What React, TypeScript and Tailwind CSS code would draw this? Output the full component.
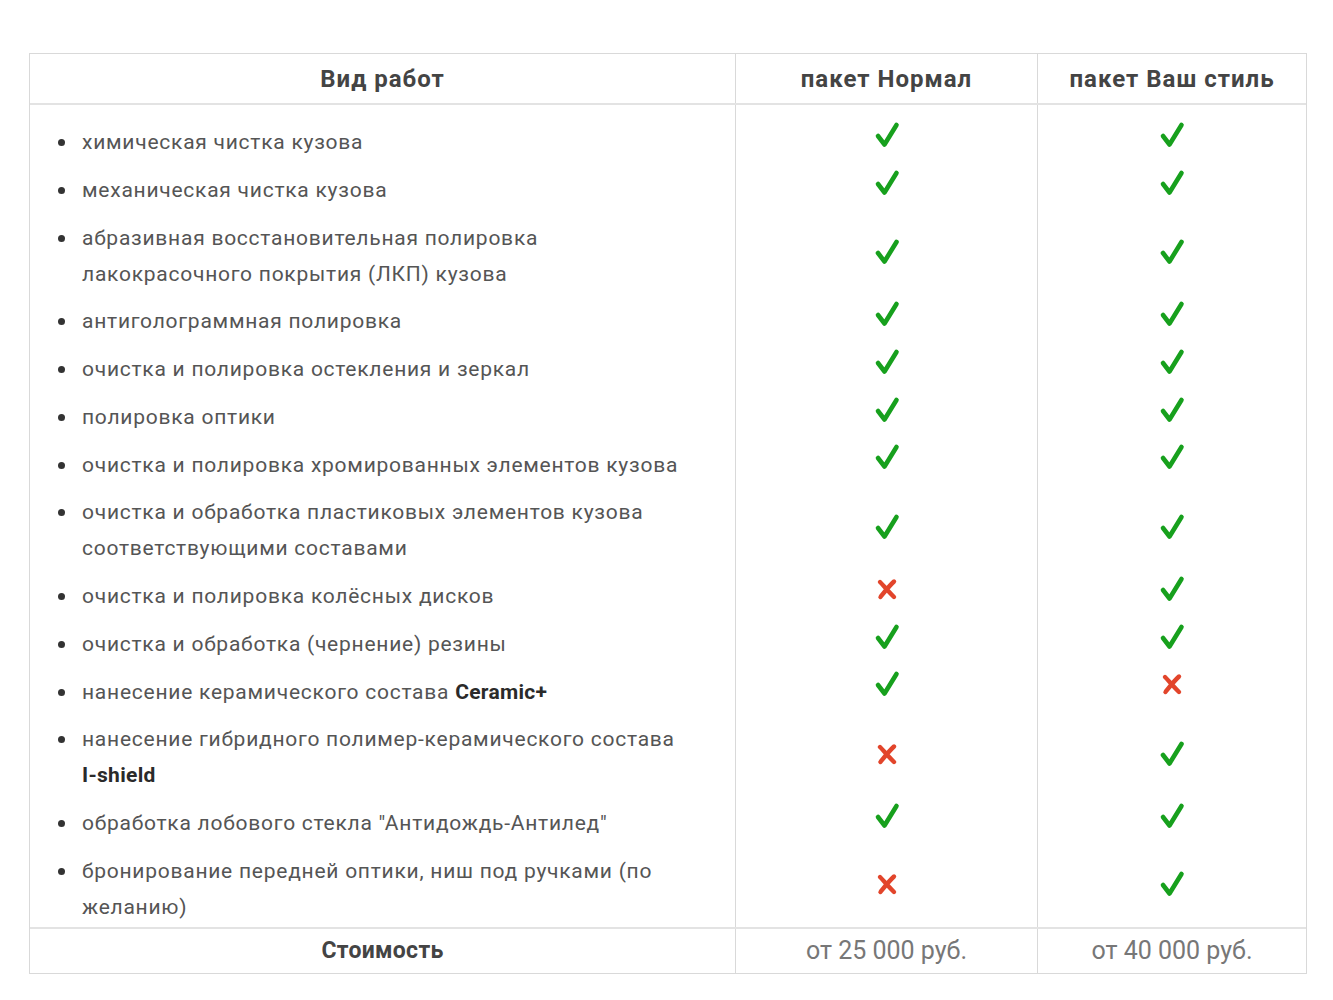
import React from 'react';

type Row = { text: React.ReactNode; lines: number; normal: boolean; style: boolean };

const rows: Row[] = [
  { text: 'химическая чистка кузова', lines: 1, normal: true, style: true },
  { text: 'механическая чистка кузова', lines: 1, normal: true, style: true },
  { text: 'абразивная восстановительная полировка лакокрасочного покрытия (ЛКП) кузова', lines: 2, normal: true, style: true },
  { text: 'антиголограммная полировка', lines: 1, normal: true, style: true },
  { text: 'очистка и полировка остекления и зеркал', lines: 1, normal: true, style: true },
  { text: 'полировка оптики', lines: 1, normal: true, style: true },
  { text: 'очистка и полировка хромированных элементов кузова', lines: 1, normal: true, style: true },
  { text: 'очистка и обработка пластиковых элементов кузова соответствующими составами', lines: 2, normal: true, style: true },
  { text: 'очистка и полировка колёсных дисков', lines: 1, normal: false, style: true },
  { text: 'очистка и обработка (чернение) резины', lines: 1, normal: true, style: true },
  {
    text: (
      <>
        нанесение керамического состава <b className="font-bold text-[#2a2a2a] tracking-[0.3px]">Ceramic+</b>
      </>
    ),
    lines: 1,
    normal: true,
    style: false,
  },
  {
    text: (
      <>
        нанесение гибридного полимер-керамического состава{' '}
        <b className="font-bold text-[#2a2a2a] tracking-[0.3px] whitespace-nowrap">I-shield</b>
      </>
    ),
    lines: 2,
    normal: false,
    style: true,
  },
  { text: 'обработка лобового стекла "Антидождь-Антилед"', lines: 1, normal: true, style: true },
  { text: 'бронирование передней оптики, ниш под ручками (по желанию)', lines: 2, normal: false, style: true },
];

// row height: 36px per line plus the gap under it
const rowHeight = (r: Row, i: number) => r.lines * 36 + (i === rows.length - 1 ? 8 : 11.75);

const Check = () => (
  <svg width="26" height="28" viewBox="0 0 26 28" className="block">
    <path
      d="M4 15 L10.5 23.5 L22.5 4"
      fill="none"
      stroke="#17a01d"
      strokeWidth="4.6"
      strokeLinecap="round"
      strokeLinejoin="round"
    />
  </svg>
);

const Cross = () => (
  <svg width="24" height="24" viewBox="0 0 24 24" className="block">
    <path
      d="M5 5 C9 9 14 15 19 20 M19 4.5 C14 9 9.5 15 5.5 20"
      fill="none"
      stroke="#e2452b"
      strokeWidth="4.4"
      strokeLinecap="round"
    />
  </svg>
);

const MarkCol = ({ pick }: { pick: (r: Row) => boolean }) => (
  <div className="border-l border-[#d9d9d9] pt-[13px]">
    {rows.map((r, i) => (
      <div
        key={i}
        className={`flex items-center justify-center ${r.lines === 1 ? 'pb-[14px]' : 'pb-[6px]'}`}
        style={{ height: rowHeight(r, i) }}
      >
        {pick(r) ? <Check /> : <Cross />}
      </div>
    ))}
  </div>
);

export default function App() {
  return (
    <div className="min-h-screen bg-white pt-[53px] pl-[29px]" style={{ fontFamily: 'Roboto, "Noto Sans", sans-serif' }}>
      <div className="w-[1278px] border border-[#d9d9d9]">
        {/* header */}
        <div className="grid grid-cols-[705px_302px_1fr] h-[51px] border-b-2 border-[#e3e3e3] text-[24px] font-bold text-[#444] tracking-[1px]">
          <div className="flex items-center justify-center">Вид работ</div>
          <div className="flex items-center justify-center border-l border-[#d9d9d9]">пакет Нормал</div>
          <div className="flex items-center justify-center border-l border-[#d9d9d9]">пакет Ваш стиль</div>
        </div>

        {/* body */}
        <div className="grid grid-cols-[705px_302px_1fr]">
          <div className="pt-[13px] pl-[28px] pr-[20px]">
            {rows.map((r, i) => (
              <div
                key={i}
                className={`flex text-[21px] leading-[36px] text-[#555] tracking-[0.75px] ${i === rows.length - 1 ? 'pt-[6px]' : 'py-[6px]'}`}
                style={{ height: rowHeight(r, i) }}
              >
                <span className="w-[24px] shrink-0 flex items-start pt-[15px]">
                  <span className="block w-[7px] h-[7px] rounded-full bg-[#333]" />
                </span>
                <span className="max-w-[620px]">{r.text}</span>
              </div>
            ))}
          </div>
          <MarkCol pick={(r) => r.normal} />
          <MarkCol pick={(r) => r.style} />
        </div>

        {/* price */}
        <div className="grid grid-cols-[705px_302px_1fr] h-[46px] border-t-2 border-[#e3e3e3]">
          <div className="flex items-center justify-center text-[23px] font-bold text-[#444] tracking-[0.3px]">Стоимость</div>
          <div className="flex items-center justify-center border-l border-[#d9d9d9] text-[25px] text-[#777]">от 25 000 руб.</div>
          <div className="flex items-center justify-center border-l border-[#d9d9d9] text-[25px] text-[#777]">от 40 000 руб.</div>
        </div>
      </div>
    </div>
  );
}
